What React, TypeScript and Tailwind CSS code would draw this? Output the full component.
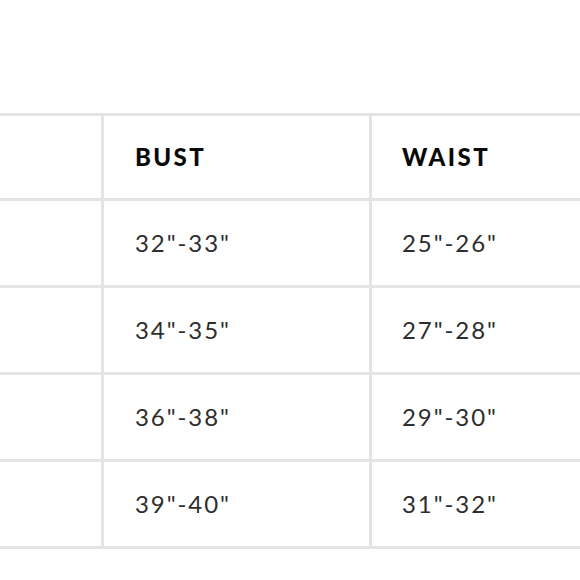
const rows = [
  ["32\"-33\"", "25\"-26\""],
  ["34\"-35\"", "27\"-28\""],
  ["36\"-38\"", "29\"-30\""],
  ["39\"-40\"", "31\"-32\""],
];

export default function App() {
  return (
    <div className="w-[580px] h-[580px] overflow-hidden bg-white pt-[113px]" style={{ fontFamily: "Lato, 'Open Sans', sans-serif" }}>
      <div className="grid w-[700px] grid-cols-[101px_265px_331px] gap-[3px] bg-[#e4e4e4] py-[3px]">
        <div className="h-[82px] bg-white" />
        <div className="h-[82px] bg-white flex items-center pl-[31px] text-[24px] font-black tracking-[0.1em] text-[#0a0a0a]">BUST</div>
        <div className="h-[82px] bg-white flex items-center pl-[30px] text-[24px] font-black tracking-[0.1em] text-[#0a0a0a]">WAIST</div>
        {rows.map((r, i) => (
          <>
            <div key={`a${i}`} className="h-[84px] bg-white" />
            <div key={`b${i}`} className="h-[84px] bg-white flex items-center pl-[31px] text-[24px] tracking-[0.08em] text-[#2e2e2e]">{r[0]}</div>
            <div key={`c${i}`} className="h-[84px] bg-white flex items-center pl-[30px] text-[24px] tracking-[0.08em] text-[#2e2e2e]">{r[1]}</div>
          </>
        ))}
      </div>
    </div>
  );
}
